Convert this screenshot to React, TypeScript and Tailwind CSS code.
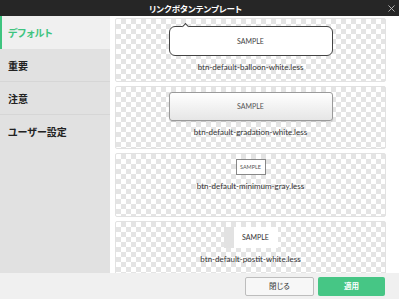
import { X } from "lucide-react";

const jp = "font-['Noto_Sans_CJK_JP',sans-serif] [font-feature-settings:'palt']";
const lato = "font-['Lato','Noto_Sans_CJK_JP',sans-serif]";

const checker =
  "bg-[image:conic-gradient(#e4e4e4_25%,#ffffff_0_50%,#e4e4e4_0_75%,#ffffff_0)] bg-size-[10px_10px]";

const menu = [
  { label: "デフォルト", active: true },
  { label: "重要" },
  { label: "注意" },
  { label: "ユーザー設定" },
];

function Card({ children, label, h }: { children: React.ReactNode; label: string; h: string }) {
  return (
    <div className={`flex shrink-0 flex-col items-center rounded-[2px] border border-[#e2e2e2] ${checker} ${h}`}>
      {children}
      <p className={`${lato} mt-[6px] text-[8px] leading-[10px] text-[#333]`}>{label}</p>
    </div>
  );
}

export default function App() {
  return (
    <div className="flex h-[299px] w-[399px] flex-col overflow-hidden bg-white">
      {/* title bar */}
      <div className="relative flex h-4 shrink-0 items-center justify-center bg-[#262626]">
        <span className={`${jp} pr-2 text-[8.5px] font-bold leading-none text-white`}>リンクボタンテンプレート</span>
        <X className="absolute right-[2px] top-[3px] text-[#bbb]" size={11} strokeWidth={2} />
      </div>

      <div className="flex min-h-0 flex-1">
        {/* sidebar */}
        <div className="w-[110px] shrink-0 bg-[#e1e1e1]">
          {menu.map((m) =>
            m.active ? (
              <div
                className={`${jp} flex h-[33px] items-center border-l-2 border-[#3ec47f] bg-[#f0f0f0] pl-[6px] text-[10px] font-bold text-[#3ec47f]`}
                key={m.label}
              >
                {m.label}
              </div>
            ) : (
              <div
                className={`${jp} flex h-[33px] items-center border-b border-[#d6d6d6] pl-2 text-[10px] font-bold text-[#222] last:border-b-0`}
                key={m.label}
              >
                {m.label}
              </div>
            ),
          )}
        </div>

        {/* templates */}
        <div className="flex min-w-0 flex-1 flex-col gap-[4px] overflow-hidden pl-[5px] pr-[13px] pt-[2px]">
          <Card h="h-[64px]" label="btn-default-balloon-white.less">
            <div className="relative mt-[7px] flex h-[30px] w-[164px] items-center justify-center rounded-[6px] border border-[#444] bg-white">
              <span className="absolute -top-[3px] left-[13px] h-[5px] w-[5px] rotate-45 border-l border-t border-[#444] bg-white" />
              <span className={`${lato} text-[7px] text-[#444]`}>SAMPLE</span>
            </div>
          </Card>

          <Card h="h-[63px]" label="btn-default-gradation-white.less">
            <div className="mt-[5px] flex h-[29px] w-[164px] items-center justify-center rounded-[3px] border border-[#9a9a9a] bg-[linear-gradient(#ffffff,#e6e6e6)] shadow-[0_1px_1px_rgba(0,0,0,0.15)]">
              <span className={`${lato} text-[7px] text-[#555]`}>SAMPLE</span>
            </div>
          </Card>

          <Card h="h-[64px]" label="btn-default-minimum-gray.less">
            <div className="mt-[5px] flex h-[16px] w-[30px] items-center justify-center border border-[#888] bg-white">
              <span className={`${lato} text-[5.5px] text-[#555]`}>SAMPLE</span>
            </div>
          </Card>

          <Card h="h-[64px]" label="btn-default-postit-white.less">
            <div className="mt-[5px] flex h-[21px] w-[54px] bg-white">
              <span className="w-[10px] bg-[#e2e2e2]" />
              <span className={`${lato} flex flex-1 items-center justify-center text-[7px] text-[#333]`}>SAMPLE</span>
            </div>
          </Card>
        </div>
      </div>

      {/* footer */}
      <div className="flex h-[26px] shrink-0 items-center justify-end gap-[4px] bg-[#f0f0f0] pr-[14px]">
        <button
          className={`${jp} h-[19px] w-[69px] rounded-[2px] border border-[#bdbdbd] bg-[#f7f7f7] text-[7.5px] text-[#333]`}
          type="button"
        >
          閉じる
        </button>
        <button
          className={`${jp} h-[19px] w-[67px] rounded-[2px] bg-[#46c685] text-[7.5px] font-bold text-white`}
          type="button"
        >
          適用
        </button>
      </div>
    </div>
  );
}
